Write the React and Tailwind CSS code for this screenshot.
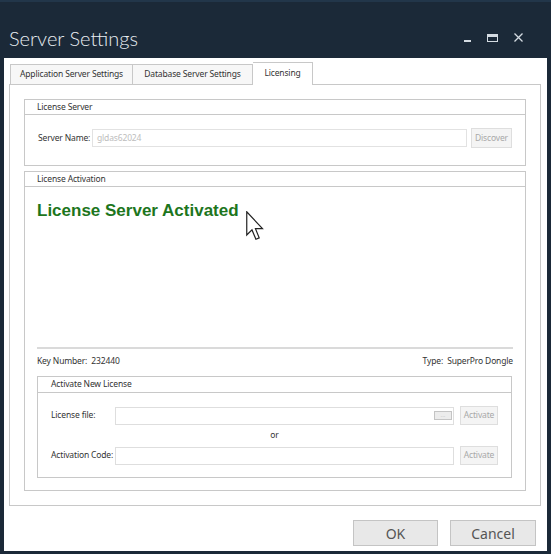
import React from "react";

const ui = { fontFamily: '"Noto Sans", "Liberation Sans", sans-serif' };

function GroupBox({ title, className = "", children }) {
  return (
    <div className={`border border-[#c8c8c8] bg-white flex flex-col ${className}`}>
      <div className="h-[15px] border-b border-[#c8c8c8] flex items-center pl-[12px] text-[8.5px] tracking-[-0.15px] text-[#333]">
        {title}
      </div>
      {children}
    </div>
  );
}

function Cursor() {
  return (
    <svg width="18" height="30" viewBox="0 0 12 20" className="absolute left-[246px] top-[209px]">
      <path
        d="M0.5 0.5 L0.5 16 L4 12.6 L6.6 18.8 L8.8 17.9 L6.3 11.8 L11 11.8 Z"
        fill="#ffffff"
        stroke="#222"
        strokeWidth="0.8"
        strokeLinejoin="miter"
      />
    </svg>
  );
}

const small = "text-[8.5px] tracking-[-0.15px] whitespace-nowrap";

export default function App() {
  return (
    <div className="relative w-[551px] h-[554px] bg-[#1b2938] flex flex-col overflow-hidden border-t-2 border-[#22364a]" style={ui}>
      {/* Title bar */}
      <div className="h-[56px] flex items-start pl-[9px] pt-[24px] shrink-0">
        <div className="text-[#e8edf2] text-[20px] leading-[24px] font-light" style={{ fontFamily: '"Lato", "Open Sans", sans-serif' }}>
          Server Settings
        </div>
        <div className="ml-auto flex items-center gap-[16px] pr-[28px] pt-[7px]">
          <div className="w-[7px] h-[2px] bg-[#d4dbe2] mt-[6px]" />
          <div className="w-[11px] h-[8px] border border-[#d4dbe2] border-t-[3px]" />
          <svg width="9" height="9" viewBox="0 0 9 9">
            <path d="M0.5 0.5 L8.5 8.5 M8.5 0.5 L0.5 8.5" stroke="#d4dbe2" strokeWidth="1.3" />
          </svg>
        </div>
      </div>

      {/* White body */}
      <div className="mx-[4px] mb-[3px] bg-white flex-1 flex flex-col pt-[4px] pl-[5px] pr-[6px] pb-[5px]">
        {/* Tabs */}
        <div className="flex items-end h-[22px] pl-[1px] relative z-10">
          <div className={`w-[123px] h-[20px] border border-[#c8c8c8] border-b-0 bg-[#f7f7f7] flex items-center justify-center text-[#333] ${small}`}>
            Application Server Settings
          </div>
          <div className={`w-[120px] h-[20px] border border-[#c8c8c8] border-b-0 border-l-0 bg-[#f7f7f7] flex items-center justify-center text-[#333] ${small}`}>
            Database Server Settings
          </div>
          <div className={`w-[60px] h-[23px] -mb-px border border-[#c8c8c8] border-b-0 border-l-0 bg-white flex items-center justify-center text-[#333] pb-[2px] ${small}`}>
            Licensing
          </div>
        </div>

        {/* Tab panel */}
        <div className="h-[422px] border border-[#c8c8c8] px-[14px] pt-[14px] flex flex-col gap-[5px]">
          <GroupBox title="License Server" className="h-[67px]">
            <div className="flex items-center px-[13px] pt-[13px]">
              <div className={`text-[#333] w-[54px] ${small}`}>Server Name:</div>
              <div className={`w-[375px] h-[18px] border border-[#e2e2e2] flex items-center px-[4px] text-[#bdbdbd] ${small}`}>
                gldas62024
              </div>
              <div className={`ml-[4px] w-[41px] h-[20px] border border-[#dedede] bg-[#f4f4f4] flex items-center justify-center text-[#a8a8a8] ${small}`}>
                Discover
              </div>
            </div>
          </GroupBox>

          <GroupBox title="License Activation" className="h-[320px]">
            <div className="flex flex-col px-[12px] flex-1">
              <div
                className="text-[#1d761d] text-[17px] font-bold leading-[20px] mt-[14px]"
                style={{ fontFamily: '"Liberation Sans", Arial, sans-serif' }}
              >
                License Server Activated
              </div>
              <div className="mt-[126px] border-t-2 border-[#dadada]" />
              <div className={`flex justify-between items-center h-[20px] mt-[2px] text-[#333] ${small}`}>
                <span>Key Number:&nbsp; 232440</span>
                <span>Type:&nbsp; SuperPro Dongle</span>
              </div>
              <div className="mt-[5px] mr-[1px] border border-[#c8c8c8] h-[102px] flex flex-col">
                <div className={`h-[16px] border-b border-[#c8c8c8] flex items-center pl-[13px] text-[#333] ${small}`}>
                  Activate New License
                </div>
                <div className="flex flex-col px-[13px] pt-[13px]">
                  <div className="flex items-center">
                    <div className={`w-[64px] text-[#333] ${small}`}>License file:</div>
                    <div className="w-[339px] h-[18px] border border-[#dedede] flex items-center justify-end pr-[1px]">
                      <div className="w-[18px] h-[9px] border border-[#c4c4c4] bg-[#ececec] flex items-center justify-center text-[6px] leading-none text-[#b0b0b0]">
                        ···
                      </div>
                    </div>
                    <div className={`ml-[6px] w-[38px] h-[19px] border border-[#dedede] bg-[#f4f4f4] flex items-center justify-center text-[#a8a8a8] ${small}`}>
                      Activate
                    </div>
                  </div>
                  <div className={`h-[21px] flex items-center justify-center text-[#333] ${small}`}>
                    or
                  </div>
                  <div className="flex items-center">
                    <div className={`w-[64px] text-[#333] ${small}`}>Activation Code:</div>
                    <div className="w-[339px] h-[18px] border border-[#dedede]" />
                    <div className={`ml-[6px] w-[38px] h-[19px] border border-[#dedede] bg-[#f4f4f4] flex items-center justify-center text-[#a8a8a8] ${small}`}>
                      Activate
                    </div>
                  </div>
                </div>
              </div>
            </div>
          </GroupBox>
        </div>

        {/* Buttons */}
        <div className="flex justify-end gap-[12px] mt-[14px] pr-[5px]">
          <div className="w-[85px] h-[26px] border border-[#c4c4c4] bg-[#e8e8e8] flex items-center justify-center text-[14px] text-[#555]">
            OK
          </div>
          <div className="w-[86px] h-[26px] border border-[#c4c4c4] bg-[#e8e8e8] flex items-center justify-center text-[14px] text-[#555]">
            Cancel
          </div>
        </div>
      </div>

      <Cursor />
    </div>
  );
}
